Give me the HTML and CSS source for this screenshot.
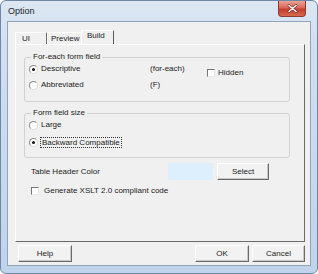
FILE: index.html
```html
<!DOCTYPE html>
<html>
<head>
<meta charset="utf-8">
<link rel="stylesheet" href="styles.css">
</head>
<body>
<div class="window">
  <div class="titlebar">
    <span class="title">Option</span>
    <button class="close" aria-label="Close">
      <svg width="11" height="9" viewBox="0 0 11 9"><path d="M2 1.5 L9 7.5 M9 1.5 L2 7.5" stroke="#6d2019" stroke-width="2.6" stroke-linecap="round"/><path d="M2 1.5 L9 7.5 M9 1.5 L2 7.5" stroke="#ffffff" stroke-width="1.6" stroke-linecap="round"/></svg>
    </button>
  </div>
  <div class="client">
    <div class="tabs">
      <div class="tab tab-ui">UI</div>
      <div class="tab tab-preview">Preview</div>
      <div class="tab tab-build selected">Build</div>
    </div>
    <div class="panel">
      <fieldset class="group">
        <legend>For-each form field</legend>
        <div class="group-body grid1">
          <label class="opt"><span class="radio checked"></span><span>Descriptive</span></label>
          <span class="hint">(for-each)</span>
          <label class="opt hidden-opt"><span class="check"></span><span>Hidden</span></label>
          <label class="opt"><span class="radio"></span><span>Abbreviated</span></label>
          <span class="hint">(F)</span>
        </div>
      </fieldset>
      <fieldset class="group group2">
        <legend>Form field size</legend>
        <div class="group-body list2">
          <label class="opt"><span class="radio"></span><span>Large</span></label>
          <label class="opt"><span class="radio checked"></span><span class="focus">Backward Compatible</span></label>
        </div>
      </fieldset>
      <div class="color-row">
        <span class="color-label">Table Header Color</span>
        <span class="swatch"></span>
        <button class="btn select-btn">Select</button>
      </div>
      <label class="opt xslt"><span class="check"></span><span>Generate XSLT 2.0 compliant code</span></label>
    </div>
    <div class="buttons">
      <button class="btn btn-help">Help</button>
      <span class="spacer"></span>
      <button class="btn btn-ok">OK</button>
      <button class="btn btn-cancel">Cancel</button>
    </div>
  </div>
</div>
</body>
</html>
```

FILE: styles.css
```css
* { box-sizing: border-box; }
html, body {
  margin: 0;
  padding: 0;
  width: 318px;
  height: 274px;
  overflow: hidden;
  background: #ffffff;
  font-family: "Liberation Sans", Arial, sans-serif;
  font-size: 8px;
  color: #222222;
}
.window {
  width: 318px;
  height: 274px;
  border: 1px solid #6f87a6;
  border-radius: 6px;
  background: linear-gradient(#dde7f3 0px, #d1e0f1 40px, #bfd3eb 274px);
  display: flex;
  flex-direction: column;
  padding: 0 6px 7px 6px;
}
.titlebar {
  height: 20px;
  display: flex;
  align-items: flex-start;
  flex: none;
}
.title {
  margin-top: 5px;
  margin-left: 1px;
  font-size: 9px;
  line-height: 11px;
  color: #1e1e1e;
}
.close {
  margin-left: auto;
  margin-right: 5px;
  width: 28px;
  height: 16px;
  padding: 0;
  border: 1px solid #8b3b31;
  border-top: none;
  border-radius: 0 0 4px 4px;
  background: linear-gradient(#e9a393 0%, #d8695a 45%, #c43d2c 55%, #d56a4f 100%);
  display: flex;
  align-items: center;
  justify-content: center;
}
.close svg { display: block; }
.client {
  flex: 1;
  background: #f0f0f0;
  border: 1px solid #93a4b8;
  display: flex;
  flex-direction: column;
  padding: 8px 5px 0 7px;
}
.tabs {
  display: flex;
  height: 14px;
  flex: none;
  align-items: flex-end;
}
.tab {
  height: 12px;
  line-height: 11px;
  padding-left: 6px;
  border-top: 1px solid #ffffff;
  border-left: 1px solid #ffffff;
  border-right: 1px solid #6a6a6a;
  white-space: nowrap;
}
.tab-ui { width: 32px; }
.tab-preview { width: 34px; padding-left: 3px; border-right-color: transparent; }
.tab-build { width: 33px; padding-left: 5px; }
.tab.selected {
  height: 14px;
  line-height: 10px;
  border-right: 1px solid #5a5a5a;
}
.panel {
  height: 198px;
  flex: none;
  border-top: 1px solid #ffffff;
  border-left: 1px solid #ffffff;
  border-right: 1px solid #6a6a6a;
  border-bottom: 1px solid #6a6a6a;
  padding: 7px 14px 0 8px;
  display: flex;
  flex-direction: column;
}
.group {
  margin: 0;
  padding: 0 4px 10px 4px;
  border: 1px solid #d2d2d2;
  border-radius: 3px;
  min-width: 0;
}
.group legend {
  padding: 0 2px;
  margin-left: 2px;
  line-height: 10px;
}
.group-body { padding-top: 1px; }
.grid1 {
  display: grid;
  grid-template-columns: 121px 57px auto;
  row-gap: 4px;
}
.hidden-opt {
  grid-row: 1 / span 2;
  grid-column: 3;
  align-self: start;
  margin-top: 4px;
}
.hint {
  line-height: 12px;
}
.group2 {
  margin-top: 6px;
  padding-bottom: 9px;
}
.list2 {
  display: flex;
  flex-direction: column;
  gap: 5px;
}
.opt {
  display: flex;
  align-items: center;
  gap: 3px;
  height: 12px;
  line-height: 12px;
}
.radio {
  width: 9px;
  height: 9px;
  border-radius: 50%;
  border: 1px solid #8a8a8a;
  border-right-color: #dcdcdc;
  border-bottom-color: #dcdcdc;
  background: #ffffff;
  position: relative;
  flex: none;
}
.radio.checked::after {
  content: "";
  position: absolute;
  left: 2px;
  top: 2px;
  width: 3px;
  height: 3px;
  border-radius: 50%;
  background: #111111;
}
.check {
  width: 8px;
  height: 8px;
  border-top: 1px solid #777777;
  border-left: 1px solid #777777;
  border-right: 1px solid #e8e8e8;
  border-bottom: 1px solid #e8e8e8;
  background: #ffffff;
  flex: none;
}
.focus {
  border: 1px dotted #333333;
  line-height: 9px;
  padding: 0 1px;
  margin-left: -1px;
}
.color-row {
  display: flex;
  align-items: center;
  margin-top: 5px;
  height: 17px;
}
.color-label {
  width: 144px;
  padding-left: 7px;
  flex: none;
}
.swatch {
  width: 45px;
  height: 17px;
  background: #ddeefc;
  flex: none;
}
.btn {
  font-family: "Liberation Sans", Arial, sans-serif;
  font-size: 8px;
  color: #222222;
  height: 17px;
  padding: 0;
  background: #f2f2f2;
  border-top: 1px solid #ffffff;
  border-left: 1px solid #ffffff;
  border-right: 1px solid #6a6a6a;
  border-bottom: 1px solid #6a6a6a;
  box-shadow: inset -1px -1px 0 #c8c8c8;
  line-height: 14px;
  text-align: center;
}
.select-btn {
  width: 52px;
  margin-left: 4px;
}
.xslt {
  margin-top: 5px;
  margin-left: 7px;
  gap: 5px;
}
.buttons {
  display: flex;
  margin-top: 3px;
  padding: 0 0 0 3px;
  height: 17px;
  flex: none;
}
.spacer { flex: 1; }
.btn-help { width: 54px; }
.btn-ok { width: 54px; }
.btn-cancel { width: 53px; margin-left: 3px; }
```
